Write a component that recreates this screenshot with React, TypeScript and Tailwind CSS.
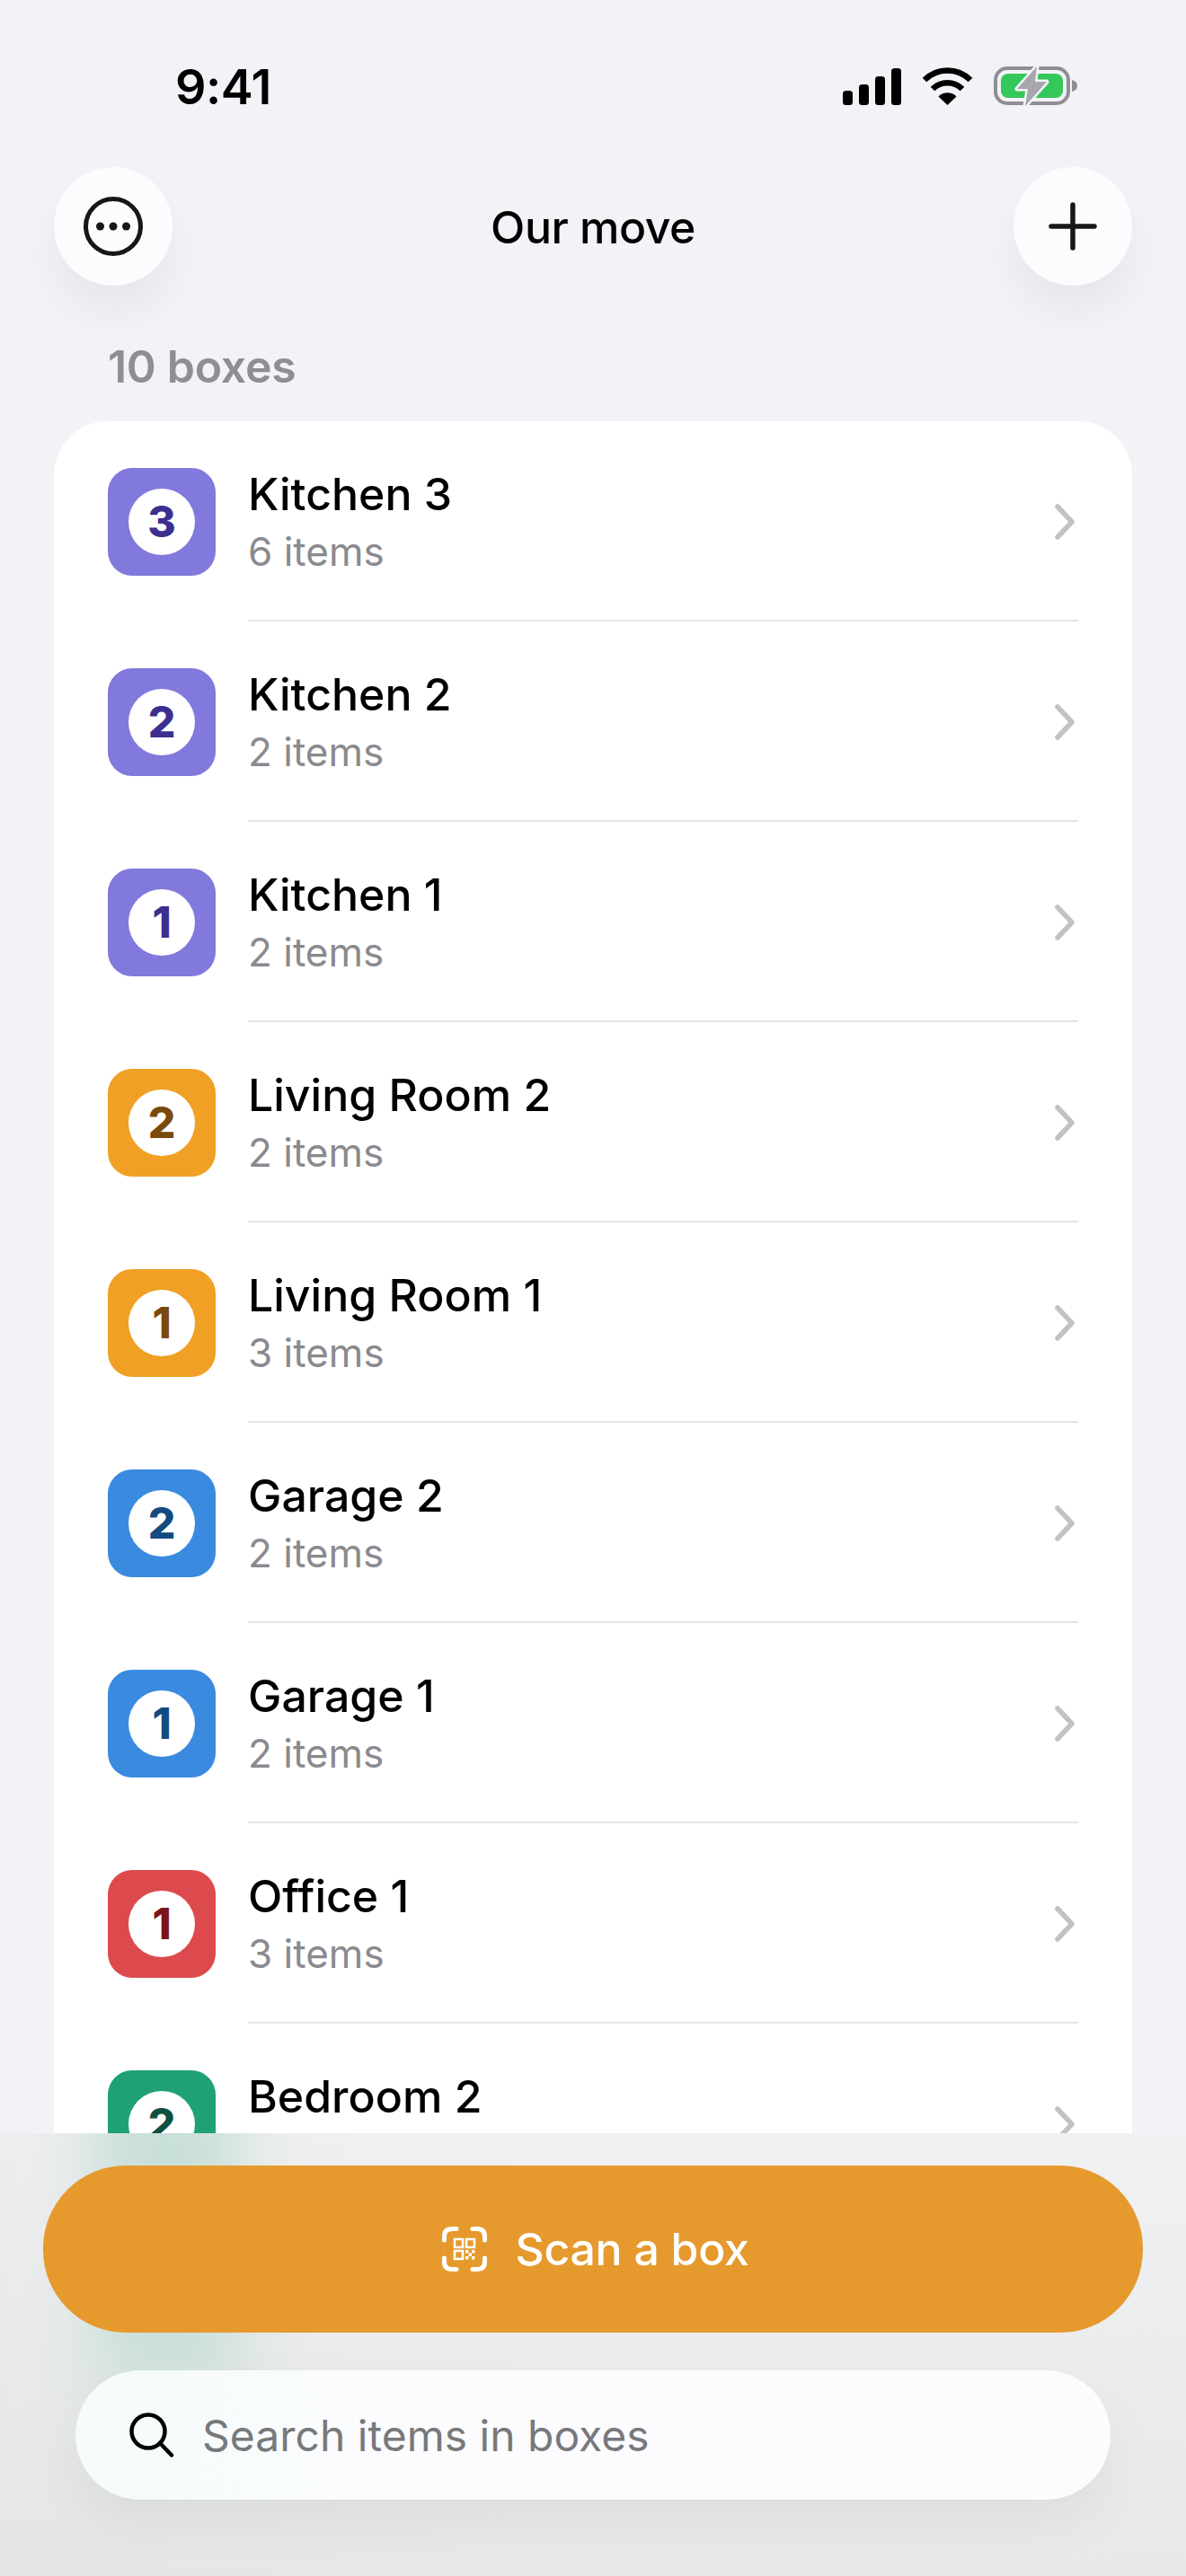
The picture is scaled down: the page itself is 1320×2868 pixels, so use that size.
const boxes = [
  { name: 'Kitchen 3', count: 6, num: 3, tile: 'bg-[#8279dc]', ink: 'text-[#3d2f8f]' },
  { name: 'Kitchen 2', count: 2, num: 2, tile: 'bg-[#8279dc]', ink: 'text-[#3d2f8f]' },
  { name: 'Kitchen 1', count: 2, num: 1, tile: 'bg-[#8279dc]', ink: 'text-[#3d2f8f]' },
  { name: 'Living Room 2', count: 2, num: 2, tile: 'bg-[#f0a024]', ink: 'text-[#7a4a0c]' },
  { name: 'Living Room 1', count: 3, num: 1, tile: 'bg-[#f0a024]', ink: 'text-[#7a4a0c]' },
  { name: 'Garage 2', count: 2, num: 2, tile: 'bg-[#3a8be0]', ink: 'text-[#134a80]' },
  { name: 'Garage 1', count: 2, num: 1, tile: 'bg-[#3a8be0]', ink: 'text-[#134a80]' },
  { name: 'Office 1', count: 3, num: 1, tile: 'bg-[#dc4a4e]', ink: 'text-[#7a1518]' },
  { name: 'Bedroom 2', count: 2, num: 2, tile: 'bg-[#1fa077]', ink: 'text-[#0f5040]' },
  { name: 'Bedroom 1', count: 2, num: 1, tile: 'bg-[#1fa077]', ink: 'text-[#0f5040]' },
]

function StatusIcons() {
  return (
    <div className="flex items-center gap-[23px] mt-[6px]">
      <svg width="65" height="41" viewBox="0 0 65 41" fill="#000">
        <rect x="0" y="25" width="11" height="16" rx="3.5" />
        <rect x="18" y="18" width="11" height="23" rx="3.5" />
        <rect x="36" y="9" width="11" height="32" rx="3.5" />
        <rect x="54" y="0" width="11" height="41" rx="3.5" />
      </svg>
      <svg width="57" height="42" viewBox="0 0 57 42" fill="none" stroke="#000" strokeWidth="6.5">
        <path d="M3 14 A36 36 0 0 1 54 14" />
        <path d="M12 24 A23.5 23.5 0 0 1 45 24" />
        <path d="M18.5 32.5 A14 14 0 0 1 38.5 32.5 L28.5 42 Z" fill="#000" stroke="none" />
      </svg>
      <svg width="94" height="46" viewBox="0 0 94 46" fill="none">
        <rect x="2" y="3" width="81" height="39" rx="13" stroke="#8e8e93" strokeWidth="4" />
        <rect x="8" y="9" width="69" height="27" rx="8" fill="#34c759" />
        <path d="M87 16 C91 17 93 19 93 22.5 C93 26 91 28 87 29 Z" fill="#8e8e93" />
        <path d="M48 1 L26 26 L38 26 L35 45 L59 18 L46 18 Z" fill="#a6a6ab" stroke="#f2f2f7" strokeWidth="5" paintOrder="stroke" strokeLinejoin="round" />
      </svg>
    </div>
  )
}

function RoundButton({ children }: { children: React.ReactNode }) {
  return (
    <button className="w-[132px] h-[132px] rounded-full bg-[#fcfcfe] flex items-center justify-center shadow-[0_30px_50px_rgba(0,0,0,0.05)]">
      {children}
    </button>
  )
}

function BoxRow({ box, last }: { box: (typeof boxes)[number]; last: boolean }) {
  return (
    <div className="flex h-[223px] pl-[60px] pr-[60px]">
      <div className={`w-[120px] h-[120px] mt-[52px] shrink-0 rounded-[27px] flex items-center justify-center ${box.tile}`}>
        <div className={`w-[74px] h-[74px] rounded-full bg-white flex items-center justify-center text-[48px] leading-none font-extrabold ${box.ink}`}>
          {box.num}
        </div>
      </div>
      <div className={`ml-[36px] flex-1 flex items-start ${last ? '' : 'border-b-[2.5px] border-[#e4e4e8]'}`}>
        <div className="flex-1 pt-[52px]">
          <div className="text-[50px] leading-[58px] font-[550] text-black">{box.name}</div>
          <div className="text-[44px] leading-[56px] mt-[7px] text-[#8a8a8e]">{box.count} items</div>
        </div>
        <svg width="24" height="40" viewBox="0 0 24 40" fill="none" stroke="#c2c2c6" strokeWidth="5.5" strokeLinecap="round" strokeLinejoin="round" className="mt-[92px] mr-[3px]">
          <path d="M4 3 L20 20 L4 37" />
        </svg>
      </div>
    </div>
  )
}

export default function App() {
  return (
    <div className="relative w-[1320px] h-[2868px] overflow-hidden bg-[#f2f2f7] font-['Inter',sans-serif]">
      <div className="flex items-center justify-between h-[186px] pl-[195px] pr-[120px]">
        <span className="text-[54px] leading-none font-semibold text-black -tracking-[0.5px] mt-[7px]">9:41</span>
        <StatusIcons />
      </div>

      <div className="flex items-center justify-between px-[60px]">
        <RoundButton>
          <svg width="66" height="66" viewBox="0 0 66 66" fill="none">
            <circle cx="33" cy="33" r="30.5" stroke="#17171a" strokeWidth="5" />
            <circle cx="18.5" cy="33" r="4.5" fill="#17171a" />
            <circle cx="33" cy="33" r="4.5" fill="#17171a" />
            <circle cx="47.5" cy="33" r="4.5" fill="#17171a" />
          </svg>
        </RoundButton>
        <h1 className="text-[50px] leading-none font-[550] text-black -tracking-[0.5px] mt-[2px]">Our move</h1>
        <RoundButton>
          <svg width="54" height="54" viewBox="0 0 54 54" fill="none" stroke="#17171a" strokeWidth="5.5" strokeLinecap="round">
            <path d="M27 3 V51 M3 27 H51" />
          </svg>
        </RoundButton>
      </div>

      <div className="pl-[120px] mt-[68px] text-[50px] leading-[44px] font-semibold text-[#8e8e93] -tracking-[0.3px]">10 boxes</div>

      <div className="mx-[60px] mt-[39px] bg-white rounded-t-[60px] overflow-hidden">
        {boxes.map((box, i) => (
          <BoxRow key={box.name} box={box} last={i === boxes.length - 1} />
        ))}
      </div>

      {/* frosted footer over the list */}
      <div className="absolute inset-x-0 bottom-0 h-[493px] overflow-hidden bg-gradient-to-b from-[#f0f1f2] to-[#e7e8ea] flex flex-col items-center">
        <div className="absolute inset-0 bg-gradient-to-r from-[#000]/[0.015] via-transparent to-transparent" />
        <div className="absolute left-[105px] w-[160px] -top-[70px] h-[350px] bg-[#c9dfd9] blur-[34px]" />
        <button className="relative mt-[36px] w-[1224px] h-[186px] pl-[6px] rounded-[92px] bg-[#e69a2d] flex items-center justify-center gap-[31px] text-white">
          <svg width="50" height="50" viewBox="0 0 50 50" fill="none" stroke="#fff">
            <path d="M2.5 15 V11 Q2.5 2.5 11 2.5 H16 M34 2.5 H39 Q47.5 2.5 47.5 11 V15 M2.5 35 V39 Q2.5 47.5 11 47.5 H16 M34 47.5 H39 Q47.5 47.5 47.5 39 V35" strokeWidth="5" strokeLinecap="round" />
            <rect x="14" y="14" width="9" height="9" strokeWidth="2.5" />
            <rect x="27" y="14" width="9" height="9" strokeWidth="2.5" />
            <rect x="14" y="27" width="9" height="9" strokeWidth="2.5" />
            <path d="M26 26 h3.5 v3.5 h-3.5 z M33 26 h3.5 v3.5 h-3.5 z M29.5 29.5 h3.5 v3.5 h-3.5 z M26 33 h3.5 v3.5 h-3.5 z M33 33 h3.5 v3.5 h-3.5 z" fill="#fff" stroke="none" />
          </svg>
          <span className="text-[50px] leading-none font-[550] -tracking-[0.3px]">Scan a box</span>
        </button>
        <div className="relative mt-[42px] w-[1152px] h-[144px] rounded-[72px] bg-gradient-to-r from-[#f5fbfa] to-[#fcfcfe] to-[35%] flex items-center pl-[60px] shadow-[0_24px_60px_rgba(0,0,0,0.05)]">
          <svg width="50" height="50" viewBox="0 0 50 50" fill="none" stroke="#000" strokeWidth="4.5" strokeLinecap="round">
            <circle cx="21" cy="21" r="18.5" />
            <path d="M34 34 L47 47.5" />
          </svg>
          <span className="ml-[31px] mt-[2px] text-[48px] leading-none text-[#77797c]">Search items in boxes</span>
        </div>
      </div>
    </div>
  )
}
